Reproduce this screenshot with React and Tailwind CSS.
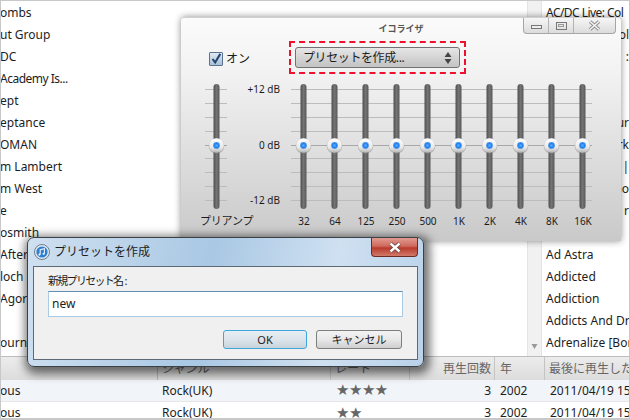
const leftRows = ["ombs", "ut Group", "DC", "Academy Is...", "ept", "eptance", "OMAN", "m Lambert", "m West", "e", "osmith", "After", "loch", "Agor", "", "ourn"];
const rightEdge = ["ol", ":", "", "", "ur", "rk", "y |", "Go", "r", ""];
const bands = ["32", "64", "125", "250", "500", "1K", "2K", "4K", "8K", "16K"];
const jp = "font-['Noto_Sans','Noto_Sans_CJK_JP',sans-serif]";

function Fader({ from = 0, to = 31 }) {
  const ticks = [8, 22, 36, 50, 64, 77, 91, 105, 119];
  return (
    <svg width="31" height="132" viewBox="0 0 31 132" className="block">
      <defs>
        <linearGradient id="track" x1="0" x2="1" y1="0" y2="0">
          <stop offset="0" stopColor="#4f4f4f" />
          <stop offset="0.5" stopColor="#747474" />
          <stop offset="1" stopColor="#585858" />
        </linearGradient>
        <linearGradient id="knob" x1="0" x2="0" y1="0" y2="1">
          <stop offset="0" stopColor="#ffffff" />
          <stop offset="0.65" stopColor="#e8e8e8" />
          <stop offset="1" stopColor="#b4b4b4" />
        </linearGradient>
        <radialGradient id="dot">
          <stop offset="0" stopColor="#66b4ff" />
          <stop offset="0.6" stopColor="#1f7ff5" />
          <stop offset="1" stopColor="#5d9de0" />
        </radialGradient>
      </defs>
      {ticks.map((y) => (
        <line key={y} x1={from} x2={to} y1={y + 0.5} y2={y + 0.5} stroke={y === 64 ? "#a8a8a8" : "#bcbcbc"} />
      ))}
      <rect x="12.5" y="3" width="6" height="125" rx="3" fill="url(#track)" />
      <circle cx="15.5" cy="65" r="7.8" fill="#8a8a8a" opacity="0.5" />
      <circle cx="15.5" cy="64.5" r="7.3" fill="url(#knob)" />
      <circle cx="15.5" cy="64.5" r="3.4" fill="url(#dot)" />
    </svg>
  );
}

function WindowButtons() {
  return (
    <div className="absolute right-[5px] top-0 flex h-[16px] rounded-b-[4px] border border-t-0 border-[#a6a6a6] bg-[linear-gradient(#f6f6f6,#dcdcdc)]">
      <div className="flex w-[25px] items-end justify-center border-r border-[#b4b4b4] pb-[4px]">
        <div className="h-[4px] w-[11px] border border-[#777] bg-[#eee]" />
      </div>
      <div className="flex w-[25px] items-center justify-center border-r border-[#b4b4b4]">
        <div className="flex h-[8px] w-[11px] items-center justify-center border border-[#777]">
          <div className="h-[3px] w-[6px] border border-[#999]" />
        </div>
      </div>
      <div className="flex w-[41px] items-center justify-center">
        <svg width="13" height="11" viewBox="0 0 13 11">
          <path d="M2 1.5 L11 9.5 M11 1.5 L2 9.5" stroke="#8c8c8c" strokeWidth="3.4" />
          <path d="M2 1.5 L11 9.5 M11 1.5 L2 9.5" stroke="#f4f4f4" strokeWidth="1.6" />
        </svg>
      </div>
    </div>
  );
}

function Equalizer() {
  return (
    <div className={`${jp} absolute left-[180px] top-[16px] h-[224px] w-[440px] rounded-t-[4px] border-t border-[#d0d0d0] bg-[linear-gradient(#fbfbfb,#f2f2f2_25%,#c9c9c9)] shadow-[0_0_7px_rgba(0,0,0,0.45)] text-[#1c1c1c]`}>
      <WindowButtons />
      <div className="h-[23px] pt-[4px] text-center text-[9px] font-bold leading-[14px] text-[#555]">イコライザ</div>

      <div className="flex h-[33px] items-start">
        <div className="ml-[28px] mt-[10px] flex items-center gap-[3px]">
          <div className="flex h-[14px] w-[14px] items-center justify-center rounded-[1px] border border-[#5b7290] bg-[linear-gradient(#dfe9f5,#a9bfd8)]">
            <svg width="14" height="14" viewBox="0 0 14 14">
              <path d="M3 7 L6 11 L12 1" fill="none" stroke="#24456e" strokeWidth="2.4" />
            </svg>
          </div>
          <span className="text-[12px] leading-[16px]">オン</span>
        </div>
        <div className="ml-[39px] h-[33px] w-[177px] border-2 border-dashed border-[#f0102c] p-[4px]">
          <div className="flex h-[21px] items-center justify-between rounded-[3px] border border-[#707070] bg-[linear-gradient(#e6e6e6,#c2c2c2)] pl-[7px] pr-[7px] shadow-[inset_0_0_1px_#fff]">
            <span className="text-[12px] leading-[16px] tracking-[-0.4px]">プリセットを作成...</span>
            <svg width="8" height="12" viewBox="0 0 8 12">
              <path d="M4 0 L7.5 5 H0.5 Z M4 12 L7.5 7 H0.5 Z" fill="#444" />
            </svg>
          </div>
        </div>
      </div>

      <div className="mt-[7px] flex pl-[20px]">
        <div className="w-[31px]">
          <Fader from={4} to={26} />
          <div className="-ml-[1px] whitespace-nowrap text-[11px] leading-[16px] tracking-[-0.2px]">プリアンプ</div>
        </div>
        <div className="mr-[8px] flex h-[127px] w-[48px] flex-col justify-between text-right text-[10px] leading-[16px]">
          <span>+12 dB</span>
          <span>0 dB</span>
          <span>-12 dB</span>
        </div>
        <div className="flex">
          {bands.map((b, i) => (
            <div key={b} className="w-[31px] text-center">
              <Fader from={i === 0 ? 3 : 0} to={i === 9 ? 25 : 31} />
              <div className="pl-[1px] text-[10px] leading-[16px]">{b}</div>
            </div>
          ))}
        </div>
      </div>
    </div>
  );
}

function Dialog() {
  return (
    <div className={`${jp} absolute left-[26px] top-[236px] flex h-[130px] w-[397px] flex-col rounded-[7px] border border-[#3c4146] bg-[linear-gradient(100deg,#cfe0f0,#a9c8e4_45%,#cfe0f1_75%,#b9d2ea)] shadow-[2px_3px_10px_4px_rgba(0,0,0,0.55)]`}>
      <div className="flex h-[28px] shrink-0 items-center gap-[4px] pl-[6px]">
        <svg width="16" height="16" viewBox="0 0 16 16">
          <circle cx="8" cy="8" r="7.5" fill="#dfe8f0" stroke="#6d7f92" />
          <circle cx="8" cy="8" r="5.6" fill="#2f7fd0" />
          <path d="M6.2 10.4 V5.6 L10.4 4.6 V9.6" fill="none" stroke="#e8f2fb" strokeWidth="1.1" />
          <circle cx="5.4" cy="10.6" r="1.1" fill="#e8f2fb" />
          <circle cx="9.6" cy="9.8" r="1.1" fill="#e8f2fb" />
        </svg>
        <span className="text-[12px] leading-[16px] text-[#1d1d1d]">プリセットを作成</span>
      </div>
      <div className="absolute right-[5px] top-0 flex h-[19px] w-[47px] items-center justify-center rounded-b-[4px] border border-t-0 border-[#6e2a24] bg-[linear-gradient(#e19a90,#cf6a5e_45%,#b93a2c_55%,#d17a6a)]">
        <svg width="14" height="11" viewBox="0 0 14 11">
          <path d="M2.5 1.5 L11.5 9.5 M11.5 1.5 L2.5 9.5" stroke="#5c3a38" strokeWidth="3.8" />
          <path d="M2.5 1.5 L11.5 9.5 M11.5 1.5 L2.5 9.5" stroke="#fff" strokeWidth="2.4" />
        </svg>
      </div>
      <div className="mx-[5px] mb-[6px] flex-1 border border-[#5d6a76] bg-[#f0f0f0] px-[14px] pt-[5px]">
        <div className="h-[19px] whitespace-nowrap text-[11px] leading-[18px] text-[#1d1d1d]">
          <span className="tracking-[-1.7px]">新規プリセット名</span>
          <span className="ml-[2px]">:</span>
        </div>
        <div className="flex h-[26px] items-center border border-[#a9cbe6] border-t-[#5f8fb5] bg-white pl-[3px] text-[12px] text-[#1d1d1d]">new</div>
        <div className="mt-[13px] flex justify-end gap-[9px] pr-[1px]">
          <button className="h-[19px] w-[84px] rounded-[3px] border border-[#3fa6dd] bg-[linear-gradient(#e6eef3,#dde5ea_50%,#c8d3da)] text-[11px] leading-[15px] text-[#1d1d1d]">OK</button>
          <button className="h-[19px] w-[86px] rounded-[3px] border border-[#7e7e7e] bg-[linear-gradient(#f3f3f3,#e8e8e8_50%,#cfcfcf)] text-[11px] leading-[15px] text-[#1d1d1d]">キャンセル</button>
        </div>
      </div>
    </div>
  );
}

function TableRow({ stars, className }) {
  return (
    <div className={`grid h-[22px] grid-cols-[158px_173px_79px_85px_50px_1fr] items-center text-[12px] text-[#1d1d1d] ${className}`}>
      <span>ous</span>
      <span className="pl-[4px]">Rock(UK)</span>
      <span className="pl-[5px] font-['DejaVu_Sans',sans-serif] text-[15px] leading-none tracking-[-0.5px] text-[#666]">{stars}</span>
      <span className="pr-[4px] text-right">3</span>
      <span className="pl-[5px]">2002</span>
      <span className="overflow-hidden whitespace-nowrap pl-[5px]">2011/04/19 15</span>
    </div>
  );
}

export default function App() {
  return (
    <div className={`${jp} relative h-[420px] w-[630px] overflow-hidden border border-b-2 border-[#c8c8c8] bg-white`}>
      <div className="flex h-[355px]">
        <div className="w-[526px] overflow-hidden pt-[1px] -indent-[1px] text-[12px] leading-[22px] text-[#1d1d1d]">
          {leftRows.map((t, i) => (
            <div key={i} className={`h-[22px] whitespace-nowrap ${i === 3 ? "tracking-[-0.5px]" : ""}`}>{t}</div>
          ))}
        </div>
        <div className="flex w-[15px] flex-col justify-end border-x border-[#e4e4e4] bg-[#f1f1f1] pb-[6px]">
          <svg width="13" height="8" viewBox="0 0 13 8">
            <path d="M3.5 2 H9.5 L6.5 7 Z" fill="#9a9a9a" />
          </svg>
        </div>
        <div className="min-w-0 flex-1 overflow-hidden pl-[4px] pt-[1px] text-[12px] leading-[22px] text-[#1d1d1d]">
          <div className="h-[22px] whitespace-nowrap tracking-[-0.55px]">AC/DC Live: Col</div>
          {rightEdge.map((t, i) => (
            <div key={i} className="h-[22px] whitespace-nowrap text-right">{t}</div>
          ))}
          <div className="h-[22px] whitespace-nowrap">Ad Astra</div>
          <div className="h-[22px] whitespace-nowrap">Addicted</div>
          <div className="h-[22px] whitespace-nowrap">Addiction</div>
          <div className="h-[22px] overflow-hidden whitespace-nowrap">Addicts And Dru</div>
          <div className="h-[22px] overflow-hidden whitespace-nowrap">Adrenalize [Bon</div>
        </div>
      </div>

      <div className="grid h-[24px] grid-cols-[157px_173px_79px_85px_50px_1fr] items-center border-t border-[#bdbdbd] bg-[linear-gradient(#ececec,#dcdcdc)] text-[12px] text-[#666]">
        <span className="h-full border-r border-[#b8b8b8]" />
        <span className="flex h-full items-center border-r border-[#c4c4c4] pl-[4px]">ジャンル</span>
        <span className="flex h-full items-center border-r border-[#c4c4c4] pl-[4px]">レート</span>
        <span className="flex h-full items-center justify-end border-r border-[#c4c4c4] pr-[3px]">再生回数</span>
        <span className="flex h-full items-center border-r border-[#c4c4c4] pl-[5px]">年</span>
        <span className="flex h-full items-center overflow-hidden whitespace-nowrap pl-[4px]">最後に再生した日</span>
      </div>
      <TableRow stars="★★★★" className="-ml-px border-b border-[#e6e6e6] bg-[#f1f4f8]" />
      <TableRow stars="★★" className="-ml-px bg-white" />

      <Equalizer />
      <Dialog />
    </div>
  );
}
